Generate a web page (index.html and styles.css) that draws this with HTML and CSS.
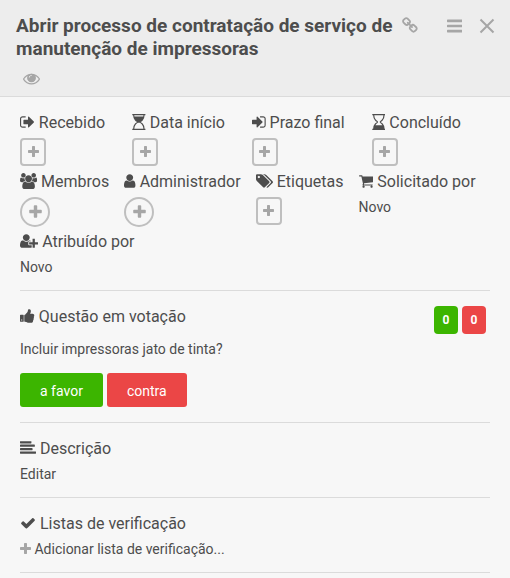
FILE: index.html
```html
<!DOCTYPE html>
<html lang="pt-BR">
<head>
<meta charset="utf-8">
<meta name="viewport" content="width=device-width, initial-scale=1">
<title>Abrir processo de contratação</title>
<link rel="stylesheet" href="styles.css">
</head>
<body>
<svg class="sprite" aria-hidden="true">
  <symbol id="plus" viewBox="192 0 1408 1792"><path d="M1600 736v192q0 40-28 68t-68 28h-416v416q0 40-28 68t-68 28h-192q-40 0-68-28t-28-68v-416h-416q-40 0-68-28t-28-68v-192q0-40 28-68t68-28h416v-416q0-40 28-68t68-28h192q40 0 68 28t28 68v416h416q40 0 68 28t28 68z"/></symbol>
</svg>
<article class="card">
  <header class="card-header">
    <div class="card-heading">
      <h1 class="title">Abrir processo de contratação de serviço de manutenção de impressoras</h1>
      <nav class="tools">
        <a class="tool" href="#link" aria-label="Copiar link"><svg class="icon icon-medium" viewBox="64 0 1664 1792"><path d="M1520 1216q0-40-28-68l-208-208q-28-28-68-28-42 0-72 32 3 3 19 18.500t21.500 21.500 15 19 13 25.500 3.500 27.500q0 40-28 68t-68 28q-15 0-27.500-3.500t-25.500-13-19-15-21.500-21.500-18.500-19q-33 31-33 73 0 40 28 68l206 207q27 27 68 27 40 0 68-26l147-146q28-28 28-67zm-703-705q0-40-28-68l-206-207q-28-28-68-28-39 0-68 27l-147 146q-28 28-28 67 0 40 28 68l208 208q27 27 68 27 42 0 72-31-3-3-19-18.500t-21.500-21.500-15-19-13-25.500-3.500-27.500q0-40 28-68t68-28q15 0 27.500 3.500t25.500 13 19 15 21.500 21.500 18.500 19q33-31 33-73zm895 705q0 120-85 203l-147 146q-83 83-203 83-121 0-204-85l-206-207q-83-83-83-203 0-123 88-209l-88-88q-86 88-208 88-120 0-204-84l-208-208q-84-84-84-204t85-203l147-146q83-83 203-83 121 0 204 85l206 207q83 83 83 203 0 123-88 209l88 88q86-88 208-88 120 0 204 84l208 208q84 84 84 204z"/></svg></a>
        <button class="tool tool-menu" type="button" aria-label="Menu"><svg class="icon icon-large" viewBox="128 0 1536 1792"><path d="M1664 1344v128q0 26-19 45t-45 19h-1408q-26 0-45-19t-19-45v-128q0-26 19-45t45-19h1408q26 0 45 19t19 45zm0-512v128q0 26-19 45t-45 19h-1408q-26 0-45-19t-19-45v-128q0-26 19-45t45-19h1408q26 0 45 19t19 45zm0-512v128q0 26-19 45t-45 19h-1408q-26 0-45-19t-19-45v-128q0-26 19-45t45-19h1408q26 0 45 19t19 45z"/></svg></button>
        <button class="tool tool-close" type="button" aria-label="Fechar"><svg class="icon" viewBox="0 0 16 16"><path class="line" d="M1.500 1.500l13 13M14.500 1.500l-13 13"/></svg></button>
      </nav>
    </div>
    <button class="tool watch" type="button" aria-label="Acompanhar"><svg class="icon icon-medium" viewBox="0 0 1792 1792"><path d="M1664 960q-152-236-381-353 61 104 61 225 0 185-131.500 316.500t-316.500 131.500-316.500-131.500-131.500-316.500q0-121 61-225-229 117-381 353 133 205 333.500 326.500t434.500 121.500 434.500-121.500 333.500-326.500zm-720-384q0-20-14-34t-34-14q-125 0-214.500 89.500t-89.500 214.500q0 20 14 34t34 14 34-14 14-34q0-86 61-147t147-61q20 0 34-14t14-34zm848 384q0 34-20 69-140 230-376.500 368.500t-499.500 138.500-499.500-139-376.500-368q-20-35-20-69t20-69q140-229 376.500-368t499.500-139 499.500 139 376.500 368q20 35 20 69z"/><path class="iris" fill-rule="evenodd" d="M896 400a432 432 0 1 0 1 0zM944 576q0-20-14-34t-34-14q-125 0-214.500 89.500t-89.500 214.500q0 20 14 34t34 14 34-14 14-34q0-86 61-147t147-61q20 0 34-14t14-34z"/></svg></button>
  </header>

  <div class="card-body">
    <section class="details">
      <div class="row dates">
        <div class="item">
          <h2 class="label"><svg class="icon" viewBox="64 0 1664 1792"><path d="M704 1440q0 4 1 20t.5 26.500-3 23.500-10 19.500-20.500 6.500h-320q-119 0-203.500-84.500t-84.500-203.500v-704q0-119 84.500-203.500t203.500-84.500h320q13 0 22.500 9.500t9.500 22.500q0 4 1 20t.5 26.500-3 23.500-10 19.500-20.500 6.500h-320q-66 0-113 47t-47 113v704q0 66 47 113t113 47h312l11.500 1 11.500 3 8 5.500 7 9 2 13.500zm928-544q0 26-19 45l-544 544q-19 19-45 19t-45-19-19-45v-288h-448q-26 0-45-19t-19-45v-384q0-26 19-45t45-19h448v-288q0-26 19-45t45-19 45 19l544 544q19 19 19 45z"/></svg> Recebido</h2>
          <button class="add" type="button" aria-label="Adicionar data de recebimento"><svg class="icon"><use href="#plus"/></svg></button>
        </div>
        <div class="item">
          <h2 class="label"><svg class="icon" viewBox="0 0 1536 1792"><path d="M32 0h1472v128h-1472zM32 1664h1472v128h-1472zM128 128h1280q0 360-210 590-100 110-250 178 150 68 250 178 210 230 210 590h-1280q0-360 210-590 100-110 250-178-150-68-250-178-210-230-210-590zM256 128q2 90 20 160h984q18-70 20-160zM256 1664h1024q-8-290-170-490-100-125-230-180h-224q-130 55-230 180-162 200-170 490z" fill-rule="evenodd"/></svg> Data início</h2>
          <button class="add" type="button" aria-label="Adicionar data de início"><svg class="icon"><use href="#plus"/></svg></button>
        </div>
        <div class="item">
          <h2 class="label"><svg class="icon" viewBox="128 0 1536 1792"><path d="M1312 896q0 26-19 45l-544 544q-19 19-45 19t-45-19-19-45v-288h-448q-26 0-45-19t-19-45v-384q0-26 19-45t45-19h448v-288q0-26 19-45t45-19 45 19l544 544q19 19 19 45zm352-352v704q0 119-84.500 203.500t-203.500 84.500h-320q-13 0-22.500-9.500t-9.500-22.500q0-4-1-20t-.5-26.500 3-23.500 10-19.500 20.500-6.500h320q66 0 113-47t47-113v-704q0-66-47-113t-113-47h-312l-11.500-1-11.500-3-8-5.500-7-9-2-13.500q0-4-1-20t-.5-26.500 3-23.500 10-19.500 20.500-6.500h320q119 0 203.500 84.500t84.500 203.500z"/></svg> Prazo final</h2>
          <button class="add" type="button" aria-label="Adicionar prazo final"><svg class="icon"><use href="#plus"/></svg></button>
        </div>
        <div class="item">
          <h2 class="label"><svg class="icon" viewBox="0 0 1536 1792"><path d="M32 0h1472v128h-1472zM32 1664h1472v128h-1472zM128 128h1280q0 360-210 590-100 110-250 178 150 68 250 178 210 230 210 590h-1280q0-360 210-590 100-110 250-178-150-68-250-178-210-230-210-590zM256 128q8 290 170 490 100 125 230 180v196q-170 70-280 260h784q-110-190-280-260v-196q130-55 230-180 162-200 170-490z" fill-rule="evenodd"/></svg> Concluído</h2>
          <button class="add" type="button" aria-label="Adicionar data de conclusão"><svg class="icon"><use href="#plus"/></svg></button>
        </div>
      </div>
      <div class="row">
        <div class="item">
          <h2 class="label"><svg class="icon" viewBox="0 0 1920 1792"><path d="M593 896q-162 5-265 128h-134q-82 0-138-40.500t-56-118.500q0-353 124-353 6 0 43.500 21t97.500 42.500 119 21.500q67 0 133-23-5 37-5 66 0 139 81 256zm1071 637q0 120-73 189.500t-194 69.500h-874q-121 0-194-69.500t-73-189.500q0-53 3.500-103.500t14-109 26.500-108.500 43-97.500 62-81 85.500-53.500 111.500-20q10 0 43 21.500t73 48 107 48 135 21.500 135-21.500 107-48 73-48 43-21.500q61 0 111.500 20t85.500 53.500 62 81 43 97.500 26.500 108.500 14 109 3.500 103.500zm-1024-1277q0 106-75 181t-181 75-181-75-75-181 75-181 181-75 181 75 75 181zm704 384q0 159-112.500 271.500t-271.500 112.500-271.500-112.500-112.500-271.500 112.500-271.500 271.500-112.500 271.500 112.500 112.500 271.500zm576 225q0 78-56 118.500t-138 40.500h-134q-103-123-265-128 81-117 81-256 0-29-5-66 66 23 133 23 59 0 119-21.500t97.500-42.500 43.500-21q124 0 124 353zm-128-609q0 106-75 181t-181 75-181-75-75-181 75-181 181-75 181 75 75 181z"/></svg> Membros</h2>
          <button class="add add-round" type="button" aria-label="Adicionar membro"><svg class="icon"><use href="#plus"/></svg></button>
        </div>
        <div class="item">
          <h2 class="label"><svg class="icon" viewBox="256 0 1280 1792"><path d="M1536 1399q0 109-62.500 187t-150.500 78h-854q-88 0-150.500-78t-62.500-187q0-85 8.500-160.500t31.500-152 58.500-131 94-89 134.500-34.500q131 128 313 128t313-128q76 0 134.500 34.500t94 89 58.500 131 31.500 152 8.500 160.500zm-256-887q0 159-112.500 271.500t-271.500 112.500-271.500-112.500-112.500-271.500 112.500-271.500 271.500-112.500 271.500 112.500 112.500 271.500z"/></svg> Administrador</h2>
          <button class="add add-round" type="button" aria-label="Adicionar administrador"><svg class="icon"><use href="#plus"/></svg></button>
        </div>
        <div class="item">
          <h2 class="label"><svg class="icon" viewBox="0 0 1920 1792"><path d="M448 448q0-53-37.500-90.500t-90.500-37.500-90.500 37.500-37.500 90.500 37.500 90.500 90.500 37.500 90.500-37.500 37.500-90.500zm1067 576q0 53-37 90l-491 492q-39 37-91 37-53 0-90-37l-715-716q-38-37-64.500-101t-26.500-117v-416q0-52 38-90t90-38h416q53 0 117 26.500t102 64.500l715 714q37 39 37 91zm384 0q0 53-37 90l-491 492q-39 37-91 37-36 0-59-14t-53-45l470-470q37-37 37-90 0-52-37-91l-715-714q-38-38-102-64.500t-117-26.500h224q53 0 117 26.500t102 64.500l715 714q37 39 37 91z"/></svg> Etiquetas</h2>
          <button class="add" type="button" aria-label="Adicionar etiqueta"><svg class="icon"><use href="#plus"/></svg></button>
        </div>
        <div class="item">
          <h2 class="label"><svg class="icon" viewBox="64 0 1664 1792"><path d="M704 1536q0 52-38 90t-90 38-90-38-38-90 38-90 90-38 90 38 38 90zm896 0q0 52-38 90t-90 38-90-38-38-90 38-90 90-38 90 38 38 90zm128-1088v512q0 24-16.500 42.500t-40.500 21.500l-1044 122q13 60 13 70 0 16-24 64h920q26 0 45 19t19 45-19 45-45 19h-1024q-26 0-45-19t-19-45q0-11 8-31.500t16-36 21.500-40 15.500-29.500l-177-823h-204q-26 0-45-19t-19-45 19-45 45-19h256q16 0 28.500 6.500t19.500 15.500 13 24.500 8 26 5.500 29.500 4.500 26h1201q26 0 45 19t19 45z"/></svg> Solicitado por</h2>
          <a class="text" href="#solicitado">Novo</a>
        </div>
      </div>
      <div class="row">
        <div class="item">
          <h2 class="label"><svg class="icon" viewBox="0 0 2048 1792"><path d="M704 896q-159 0-271.500-112.500t-112.500-271.500 112.500-271.500 271.500-112.500 271.500 112.500 112.500 271.500-112.500 271.500-271.500 112.500zm960 128h352q13 0 22.500 9.500t9.500 22.500v192q0 13-9.500 22.500t-22.500 9.500h-352v352q0 13-9.500 22.500t-22.500 9.500h-192q-13 0-22.500-9.500t-9.500-22.500v-352h-352q-13 0-22.500-9.500t-9.500-22.500v-192q0-13 9.500-22.500t22.500-9.500h352v-352q0-13 9.500-22.500t22.500-9.500h192q13 0 22.500 9.500t9.500 22.500v352zm-736 224q0 52 38 90t90 38h256v238q-68 50-171 50h-874q-121 0-194-69t-73-190q0-53 3.500-103.500t14-109 26.500-108.500 43-97.500 62-81 85.500-53.500 111.500-20q19 0 39 17 79 61 154.500 91.500t164.500 30.500 164.500-30.500 154.500-91.500q20-17 39-17 132 0 217 96h-223q-52 0-90 38t-38 90v192z"/></svg> Atribuído por</h2>
          <a class="text" href="#atribuido">Novo</a>
        </div>
      </div>
    </section>

    <section class="section">
      <div class="vote-top">
        <h2 class="label"><svg class="icon" viewBox="64 0 1664 1792"><path d="M320 1344q0-26-19-45t-45-19q-27 0-45.500 19t-18.500 45q0 27 18.500 45.500t45.500 18.500q26 0 45-18.500t19-45.500zm160-512v640q0 26-19 45t-45 19h-288q-26 0-45-19t-19-45v-640q0-26 19-45t45-19h288q26 0 45 19t19 45zm1184 0q0 86-55 149 15 44 15 76 3 76-43 137 17 56 0 117-15 57-54 94 9 112-49 181-64 76-197 78h-129q-66 0-144-15.500t-121.500-29-120.500-39.500q-123-43-158-44-26-1-45-19.500t-19-44.500v-641q0-25 18-43.500t43-20.500q24-2 76-59t101-121q68-87 101-120 18-18 31-48t17.500-48.500 13.500-60.500q7-39 12.500-61t19.500-52 34-50q19-19 45-19 46 0 82.500 10.500t60 26 40 40.500 24 45 12 50 5 45 .5 39q0 38-9.500 76t-19 60-27.500 56q-3 6-10 18t-11 22-8 24h277q78 0 135 57t57 135z"/></svg> Questão em votação</h2>
        <div class="counts"><span class="count positive">0</span><span class="count negative">0</span></div>
      </div>
      <p class="question">Incluir impressoras jato de tinta?</p>
      <div class="vote-actions">
        <button class="vote positive" type="button">a favor</button>
        <button class="vote negative" type="button">contra</button>
      </div>
    </section>

    <section class="section">
      <h2 class="label"><svg class="icon" viewBox="0 0 1792 1792"><path d="M1792 1344v128q0 26-19 45t-45 19h-1664q-26 0-45-19t-19-45v-128q0-26 19-45t45-19h1664q26 0 45 19t19 45zm-384-384v128q0 26-19 45t-45 19h-1280q-26 0-45-19t-19-45v-128q0-26 19-45t45-19h1280q26 0 45 19t19 45zm256-384v128q0 26-19 45t-45 19h-1536q-26 0-45-19t-19-45v-128q0-26 19-45t45-19h1536q26 0 45 19t19 45zm-384-384v128q0 26-19 45t-45 19h-1152q-26 0-45-19t-19-45v-128q0-26 19-45t45-19h1152q26 0 45 19t19 45z"/></svg> Descrição</h2>
      <a class="text" href="#editar">Editar</a>
    </section>

    <section class="section last">
      <h2 class="label"><svg class="icon" viewBox="0 0 1792 1792"><path d="M1671 566q0 40-28 68l-724 724-136 136q-28 28-68 28t-68-28l-136-136-362-362q-28-28-28-68t28-68l136-136q28-28 68-28t68 28l294 295 656-657q28-28 68-28t68 28l136 136q28 28 28 68z"/></svg> Listas de verificação</h2>
      <a class="text" href="#lista"><svg class="icon icon-small"><use href="#plus"/></svg> Adicionar lista de verificação...</a>
    </section>
  </div>
</article>
</body>
</html>
```
FILE: styles.css
```css
* {
  box-sizing: border-box;
}

body {
  margin: 0;
  background: #f7f7f7;
  color: #4d4d4d;
  font: 14px/20px Roboto, "Liberation Sans", sans-serif;
}

h1,
h2,
p {
  margin: 0;
}

a {
  color: inherit;
  text-decoration: none;
}

button {
  border: 0;
  padding: 0;
  background: none;
  color: inherit;
  font: inherit;
  cursor: pointer;
}

.sprite {
  position: absolute;
  width: 0;
  height: 0;
}

.icon {
  width: auto;
  height: 16px;
  fill: currentColor;
  vertical-align: -2px;
}

.icon-medium {
  height: 17px;
}

.icon-large {
  height: 18px;
}

.icon-small {
  width: 11px;
  height: 14px;
  color: #a6a6a6;
}

/* Header */
.card-header {
  padding: 14px 15px 8px 16px;
  border-bottom: 1px solid #dbdbdb;
  background: #ededed;
}

.card-heading {
  display: flex;
  align-items: flex-start;
  gap: 8px;
}

.title {
  flex: 1;
  font-size: 19px;
  line-height: 23px;
  font-weight: 700;
}

.tools {
  display: flex;
  align-items: center;
  height: 23px;
}

.tool {
  display: flex;
  color: #a6a6a6;
}

.tool-menu {
  margin-left: 29px;
}

.tool-close {
  margin-left: 17px;
}

.line {
  fill: none;
  stroke: currentColor;
  stroke-width: 2;
}

.iris {
  fill: currentColor;
}

.watch {
  margin: 10px 7px 1px;
}

/* Details */
.card-body {
  padding: 15px 20px;
}

.details {
  display: flex;
  flex-direction: column;
  gap: 4px;
  padding-bottom: 13px;
}

.row {
  display: flex;
  flex-wrap: wrap;
  column-gap: 15px;
}

.dates {
  column-gap: 27px;
}

.label {
  margin-bottom: 4px;
  font-size: 16px;
  line-height: 22px;
  font-weight: 400;
}

.text {
  display: block;
}

.add {
  display: flex;
  align-items: center;
  justify-content: center;
  width: 26px;
  height: 28px;
  margin-bottom: 1px;
  border: 2px solid #bfbfbf;
  border-radius: 4px;
  color: #a6a6a6;
}

.add .icon {
  width: 11px;
  height: 14px;
}

.add-round {
  width: 30px;
  height: 30px;
  margin-bottom: 0;
  border-radius: 50%;
}

.add-round .icon {
  width: 13px;
  height: 16px;
}

/* Sections */
.section {
  padding: 15px 0 13px;
  border-top: 1px solid #dbdbdb;
}

.last {
  border-bottom: 1px solid #dbdbdb;
}

.vote-top {
  display: flex;
  justify-content: space-between;
  height: 28px;
  padding-right: 4px;
}

.counts {
  display: flex;
  gap: 4px;
}

.count {
  width: 24px;
  border-radius: 4px;
  font-size: 12px;
  line-height: 28px;
  font-weight: 700;
  text-align: center;
}

.positive {
  background: #3cb500;
  color: #fff;
}

.negative {
  background: #eb4646;
  color: #fff;
}

.question {
  margin: 5px 0 14px;
}

.vote-actions {
  display: flex;
  gap: 4px;
  padding-bottom: 2px;
}

.vote {
  padding: 8px 20px 6px;
  border-radius: 3px;
}
```
